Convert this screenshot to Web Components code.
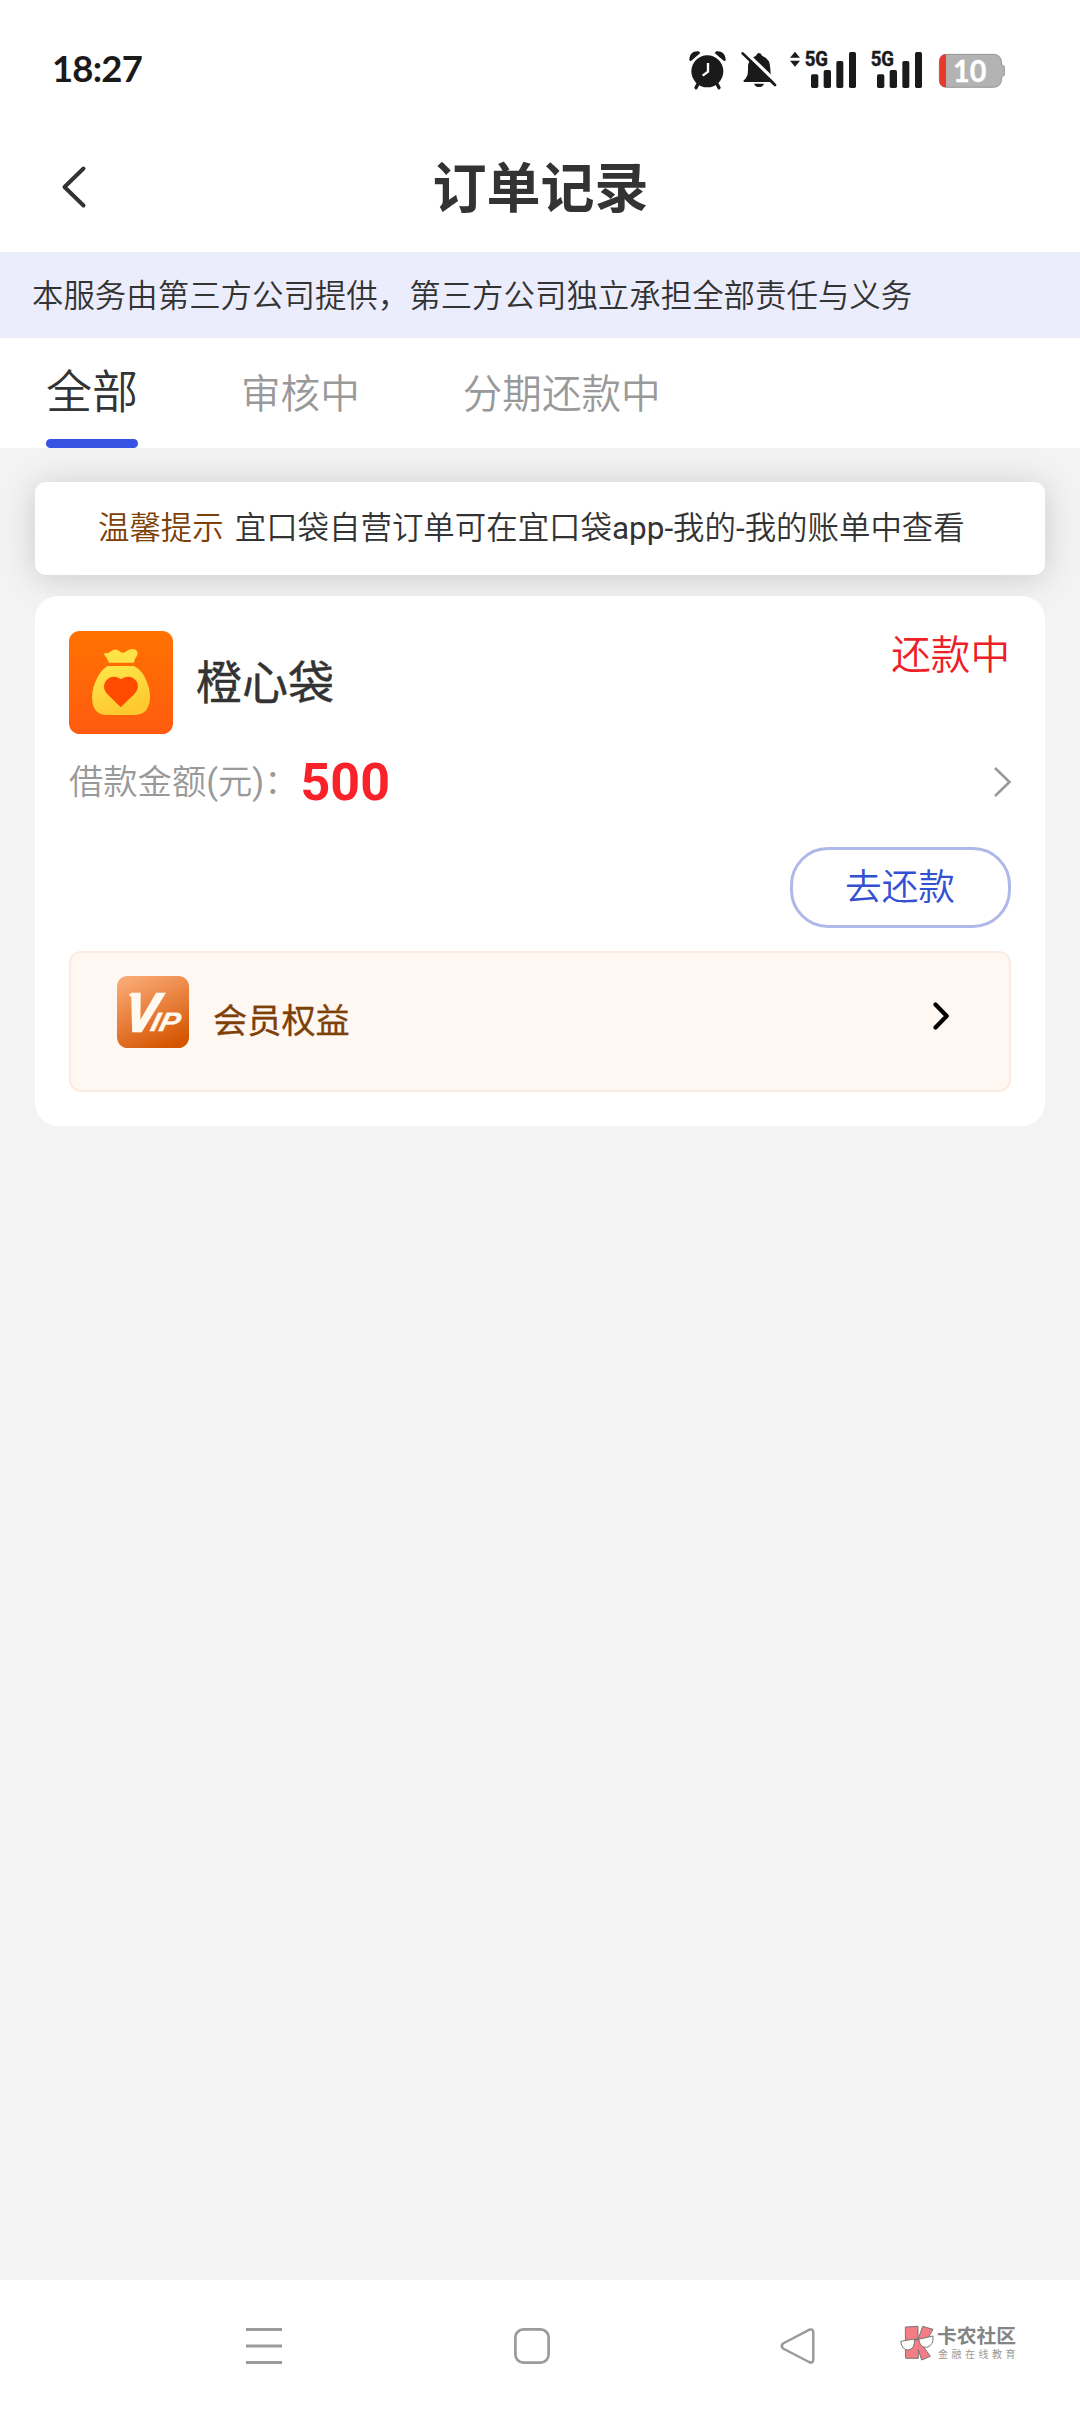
<!DOCTYPE html>
<html lang="zh-CN">
<head>
<meta charset="utf-8">
<title>订单记录</title>
<style>
html,body{margin:0;padding:0}
body{width:1080px;height:2412px;overflow:hidden;background:#f3f3f3;font-family:Roboto,"Noto Sans CJK SC",sans-serif;font-weight:350;color:#333}
</style>
</head>
<body>
<order-app></order-app>
<script>
const define = (name, css, html) => customElements.define(name, class extends HTMLElement {
  constructor() {
    super();
    this.attachShadow({ mode: 'open' }).innerHTML =
      `<style>*{box-sizing:border-box}svg{display:block;flex:none;overflow:visible}:host{box-sizing:border-box}${css}</style>${html}`;
  }
});

define('status-bar', `
:host{display:flex;justify-content:space-between;align-items:flex-start;height:130px;padding:30px 50px 0 52px}
.time{font:700 36.500px/77px Lato,sans-serif;color:#1a1a1a;letter-spacing:-.8px;white-space:nowrap}
`, `<span class="time">18:27</span>
<svg width="360" height="80" viewBox="0 0 1080 240" fill="#1a1a1a">
  <circle cx="112" cy="124" r="48"/>
  <path d="M58 90C58 72 70 62 86 64L91 69L64 92Q60 95 58 90ZM167 90C167 72 155 62 139 64L134 69L161 92Q165 95 167 90Z"/>
  <path d="M84 162L78 173M141 162L147 173" stroke="#1a1a1a" stroke-width="10" stroke-linecap="round"/>
  <path d="M114 99V125L98 137" fill="none" stroke="#fff" stroke-width="7"/>
  <path d="M221 156V151Q234 143 234 121V106Q237 86 258 77Q260 69 267 69Q274 69 276 77Q301 86 301 116Q301 143 312 152L314 156Z"/>
  <path d="M252 161H282Q278 171 267 171Q256 171 252 161Z"/>
  <path d="M224 64L323 160" stroke="#fff" stroke-width="10"/>
  <path d="M218 70L315 165" stroke="#1a1a1a" stroke-width="8" stroke-linecap="round"/>
  <path d="M375 65L390 83H360ZM375 110L390 92H360Z"/>
  <g><text x="404" y="109" font-family="Roboto" font-weight="700" font-size="62" textLength="70" lengthAdjust="spacingAndGlyphs" stroke="#1a1a1a" stroke-width="1.5">5G</text>
  <rect x="423" y="133" width="22" height="41" rx="5"/><rect x="461" y="120" width="22" height="54" rx="5"/><rect x="499" y="93" width="21" height="81" rx="5"/><rect x="537" y="66" width="21" height="108" rx="5"/></g>
  <g transform="translate(198 0)"><text x="404" y="109" font-family="Roboto" font-weight="700" font-size="62" textLength="70" lengthAdjust="spacingAndGlyphs" stroke="#1a1a1a" stroke-width="1.5">5G</text>
  <rect x="423" y="133" width="22" height="41" rx="5"/><rect x="461" y="120" width="22" height="54" rx="5"/><rect x="499" y="93" width="21" height="81" rx="5"/><rect x="537" y="66" width="21" height="108" rx="5"/></g>
  <path d="M830 73H970Q993 73 995 98V104L1003 109V136L995 140V147Q993 172 970 172H830Q808 172 808 149V96Q808 73 830 73Z" fill="#b3b3b3" stroke="#8a8a8a" stroke-width="2.5"/>
  <path d="M828 73V172Q808 171 808 149V96Q808 74 828 73Z" fill="#e8392d"/>
  <text x="849" y="157" font-family="Lato" font-weight="700" font-size="90" textLength="100" lengthAdjust="spacingAndGlyphs" fill="#fff" stroke="#fff" stroke-width="1">10</text>
</svg>`);

define('title-bar', `
:host{display:flex;align-items:center;justify-content:space-between;height:122px;padding:0 61px 8px 62px}
h1{margin:0;padding-top:6px;font-size:54px;line-height:78px;font-weight:700;color:#333}
i{width:23px}
`, `<svg width="23" height="42" viewBox="0 0 23 42" fill="none" stroke="#333" stroke-width="4" stroke-linecap="round" stroke-linejoin="round"><path d="M21.5 2.5L2.5 21L21.5 39.500"/></svg><h1><slot></slot></h1><i></i>`);

define('notice-strip', `
:host{display:flex;align-items:center;height:86px;padding:0 32px 4px;background:#ebedfc;font-size:31.450px;color:#333;white-space:nowrap}
`, `<span><slot></slot></span>`);

define('tab-item', `
:host{display:flex;flex-direction:column;justify-content:space-between;height:110px;font-size:39.600px;line-height:56px;color:#999;padding-top:29px;white-space:nowrap}
:host([active]){font-size:46px;color:#333;padding-top:26px}
i{display:none;height:9px;border-radius:5px;background:#3652e2}
:host([active]) i{display:block}
`, `<span><slot></slot></span><i></i>`);

define('tab-bar', `:host{display:flex;gap:103px;height:110px;padding-left:46px;background:#fff}`, `<slot></slot>`);

define('tip-card', `
:host{display:flex;align-items:center;height:93px;margin:34px 35px 0;padding:0 63px 6px;background:#fff;border-radius:11px;box-shadow:0 3px 34px rgba(0,0,0,.17);font-size:31.450px;white-space:nowrap;gap:11px}
b{font-weight:inherit;color:#7d4108}
`, `<b><slot name="label"></slot></b><span><slot></slot></span>`);

define('bag-icon', `:host{display:block;width:104px;height:103px}`, `
<svg width="104" height="103" viewBox="0 0 312 309">
<defs><linearGradient id="b" x1="0" y1="0" x2="0" y2="1"><stop stop-color="#ff7200"/><stop offset="1" stop-color="#ff5b10"/></linearGradient>
<linearGradient id="y" x1="0" y1="0" x2=".4" y2="1"><stop stop-color="#ffe84b"/><stop offset="1" stop-color="#fdc92f"/></linearGradient></defs>
<rect width="312" height="309" rx="32" fill="url(#b)"/>
<path d="M107 69Q120 69 131 60Q141 54 151 62Q162 73 175 61Q188 52 200 59Q208 67 200 77Q195 83 193 93H121Q119 83 112 77Z" fill="#ffe247" stroke="#ffe247" stroke-width="4" stroke-linejoin="round"/>
<path d="M116 105H195Q222 119 235 156Q246 185 242 211Q236 252 196 252H115Q76 252 70 213Q66 184 79 153Q92 119 116 105Z" fill="url(#y)"/>
<path d="M155 229L114 188Q99 170 109 152Q125 130 150 141L156 145L162 141Q188 130 204 153Q212 170 197 188Z" fill="#ff4b00"/>
</svg>`);

define('pill-button', `
:host{display:flex;align-items:center;justify-content:center;width:221px;height:81px;padding:0 1px 7px 0;border:3px solid #aeb9ea;border-radius:38px;font-size:36.700px;color:#334fd2;white-space:nowrap}
`, `<slot></slot>`);

define('vip-row', `
:host{display:flex;align-items:flex-start;height:141px;padding:23px 60px 0 46px;border:2px solid #fbece3;border-radius:12px;background:#fff7f2}
.t{flex:1;margin-left:24px;font-size:34.200px;line-height:50px;margin-top:20px;font-weight:400;-webkit-text-stroke:.3px currentColor;color:#7d4108}
.c{margin-top:26px}
`, `
<svg width="72" height="72" viewBox="0 0 216 216"><defs><linearGradient id="g" x1=".25" y1="0" x2=".7" y2="1"><stop stop-color="#f9a873"/><stop offset="1" stop-color="#d55500"/></linearGradient></defs>
<rect width="216" height="216" rx="32" fill="url(#g)"/>
<path d="M37 53H62V61H37Z" fill="#fff9ef"/>
<g fill="#fff9ef" stroke="#fff9ef" font-family="Liberation Sans" font-weight="700" font-style="italic">
<text transform="translate(20 165) skewX(-7)" font-size="162" stroke-width="7" textLength="97" lengthAdjust="spacingAndGlyphs">V</text>
<text transform="translate(97 165) skewX(-14)" font-size="80" stroke-width="1" textLength="86" lengthAdjust="spacingAndGlyphs">IP</text></g></svg>
<span class="t"><slot></slot></span>
<svg class="c" width="16" height="28" viewBox="0 0 16 28" fill="none" stroke="#000" stroke-width="4.200" stroke-linecap="round" stroke-linejoin="round"><path d="M2.500 2.500L13.700 14L2.500 25.500"/></svg>`);

define('order-card', `
:host{display:flex;flex-direction:column;height:530px;margin:21px 35px 0;padding:35px 34px 34px;background:#fff;border-radius:23px;position:relative}
.head{display:flex;height:103px}
.name{flex:1;margin-left:23px;font-size:46px;line-height:66px;margin-top:19px;font-weight:400;-webkit-text-stroke:.4px currentColor}
.state{font-size:39.600px;line-height:56px;margin:-3px 1px 0 0;color:#ee2027}
.amount{display:flex;align-items:center;justify-content:space-between;height:74px;margin-top:11px}
.amount div{display:flex;align-items:center}
.k{font-size:34.300px;line-height:50px;color:#999}
.v{font:700 52px/60px Roboto;color:#f9212a;margin:1px 0 0 2px}
.act{display:flex;justify-content:flex-end;height:81px;margin:28px 0 23px}
`, `
<div class="head"><bag-icon></bag-icon><span class="name"><slot name="name"></slot></span><span class="state"><slot name="state"></slot></span></div>
<div class="amount"><div><span class="k">借款金额<span style="font-weight:400">(</span>元<span style="font-weight:400">)</span>：</span><span class="v"><slot name="amount"></slot></span></div>
<svg width="17" height="30" viewBox="0 0 17 30" fill="none" stroke="#999" stroke-width="2.600"><path d="M1 1L15.500 15L1 29"/></svg></div>
<div class="act"><pill-button>去还款</pill-button></div>
<vip-row>会员权益</vip-row>`);

define('community-mark', `
:host{display:flex;align-items:flex-start;gap:3px;height:40px}
div{display:flex;flex-direction:column}
b{font:700 19.800px/22px "Noto Sans CJK SC",sans-serif;color:#848484;white-space:nowrap;margin-top:-1px}
span{font:400 10px/12px "Noto Sans CJK SC",sans-serif;letter-spacing:3.500px;color:#999;white-space:nowrap;margin:2px 0 0 1px}
`, `
<svg width="34" height="36" viewBox="0 0 102 108"><g fill="#f47c84" stroke="#777" stroke-width="3" stroke-linejoin="round">
<path d="M16 6L54 4V44L68 4L99 13L80 47L64 56L91 94L65 105L55 74V100H17Z"/></g>
<path d="M2 49L43 42Q46 72 24 75Q6 75 2 49ZM56 43L99 33Q102 61 80 67Q61 69 56 43Z" fill="#fff" stroke="#777" stroke-width="3"/><path d="M43 46Q50 40 56 45" fill="none" stroke="#777" stroke-width="4"/></svg>
<div><b>卡农社区</b><span>金融在线教育</span></div>`);

define('nav-bar', `
:host{display:flex;align-items:flex-start;height:132px;padding:48px 0 0 246px;background:#fff}
.h{margin-left:232px}.b{margin-left:230px}community-mark{margin:-3px 0 0 85px}
`, `
<svg width="36" height="36" viewBox="0 0 36 36" fill="#9b9b9b"><path d="M0 0H36V3H0ZM0 16.500H36V19.500H0ZM0 33H36V36H0Z"/></svg>
<svg class="h" width="36" height="36" viewBox="0 0 36 36" fill="none" stroke="#9b9b9b" stroke-width="2.700"><rect x="1.400" y="1.400" width="33.200" height="33.200" rx="8"/></svg>
<svg class="b" width="35" height="36" viewBox="0 0 35 36" fill="none" stroke="#9b9b9b" stroke-width="2.500" stroke-linejoin="round"><path d="M29 1.800L3 15.500Q.5 18 3 20.500L29 34Q33 35.500 33.300 32V4Q33 .5 29 1.800Z"/></svg>
<community-mark></community-mark>`);

define('order-app', `
:host{display:flex;flex-direction:column;width:1080px;height:2412px;background:#f3f3f3}
header{background:#fff}
main{flex:1;display:flex;flex-direction:column}
`, `
<header><status-bar></status-bar><title-bar>订单记录</title-bar></header>
<notice-strip>本服务由第三方公司提供，第三方公司独立承担全部责任与义务</notice-strip>
<tab-bar><tab-item active>全部</tab-item><tab-item>审核中</tab-item><tab-item>分期还款中</tab-item></tab-bar>
<main>
<tip-card><span slot="label">温馨提示</span>宜口袋自营订单可在宜口袋<span style="font-weight:400">app-</span>我的<span style="font-weight:400">-</span>我的账单中查看</tip-card>
<order-card><span slot="name">橙心袋</span><span slot="state">还款中</span><span slot="amount">500</span></order-card>
</main>
<nav-bar></nav-bar>`);
</script>
</body>
</html>
